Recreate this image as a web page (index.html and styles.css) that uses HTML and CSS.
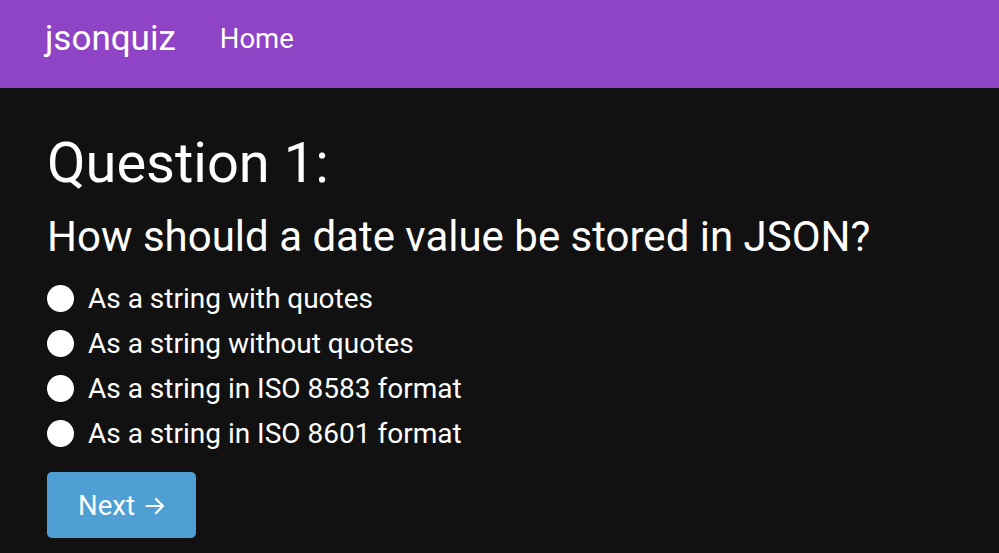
FILE: index.html
```html
<!DOCTYPE html>
<html lang="en">
<head>
    <meta charset="UTF-8">
    <meta name="viewport" content="width=device-width, initial-scale=1.0">
    <title>jsonquiz</title>
    <link rel="stylesheet" href="styles.css">
</head>
<body>
    <nav class="navbar">
        <a class="brand" href="#">jsonquiz</a>
        <a class="nav-link" href="#">Home</a>
    </nav>

    <main class="quiz">
        <h1 class="question-title">Question 1:</h1>
        <h2 class="question-text">How should a date value be stored in JSON?</h2>

        <form id="quizForm">
            <div class="option">
                <input type="radio" name="answer" id="opt1" value="1">
                <label for="opt1">As a string with quotes</label>
            </div>
            <div class="option">
                <input type="radio" name="answer" id="opt2" value="2">
                <label for="opt2">As a string without quotes</label>
            </div>
            <div class="option">
                <input type="radio" name="answer" id="opt3" value="3">
                <label for="opt3">As a string in ISO 8583 format</label>
            </div>
            <div class="option">
                <input type="radio" name="answer" id="opt4" value="4">
                <label for="opt4">As a string in ISO 8601 format</label>
            </div>
            <button class="next-btn" type="button">
                Next
                <svg class="arrow" width="20" height="18" viewBox="0 0 20 18" fill="none" stroke="#ffffff" stroke-width="2.2" stroke-linecap="round" stroke-linejoin="round">
                    <path d="M1.5 9H18M11 2l7 7-7 7"/>
                </svg>
            </button>
        </form>
    </main>
</body>
</html>
```

FILE: styles.css
```css
body {
    font-family: Roboto, "Noto Sans", sans-serif;
    margin: 0;
    padding: 0;
    background-color: #111111;
    color: #ffffff;
}

.navbar {
    display: flex;
    align-items: center;
    gap: 44px;
    height: 76px;
    padding: 0 0 12px 45px;
    background-color: #8e44c4;
}

.brand {
    color: #ffffff;
    text-decoration: none;
    font-size: 35px;
}

.nav-link {
    color: #ffffff;
    text-decoration: none;
    font-size: 27.5px;
}

.quiz {
    padding: 0 47px;
}

.question-title {
    font-size: 56px;
    font-weight: 400;
    margin: 0;
    padding-top: 42px;
    line-height: 66px;
}

.question-text {
    font-size: 42px;
    font-weight: 400;
    margin: 16px 0 14px 0;
    line-height: 50px;
}

.option {
    display: flex;
    align-items: center;
    gap: 14px;
    height: 45px;
}

.option input[type="radio"] {
    appearance: none;
    width: 27px;
    height: 27px;
    margin: 0;
    border-radius: 50%;
    background-color: #ffffff;
}

.option label {
    font-size: 28px;
}

.next-btn {
    display: flex;
    align-items: center;
    justify-content: center;
    gap: 10px;
    margin-top: 16px;
    width: 149px;
    height: 66px;
    border: none;
    border-radius: 5px;
    background-color: #4f9fd5;
    color: #ffffff;
    font-family: Roboto, "Noto Sans", sans-serif;
    font-size: 27.5px;
}

.arrow {
    margin-top: 1px;
}
```
